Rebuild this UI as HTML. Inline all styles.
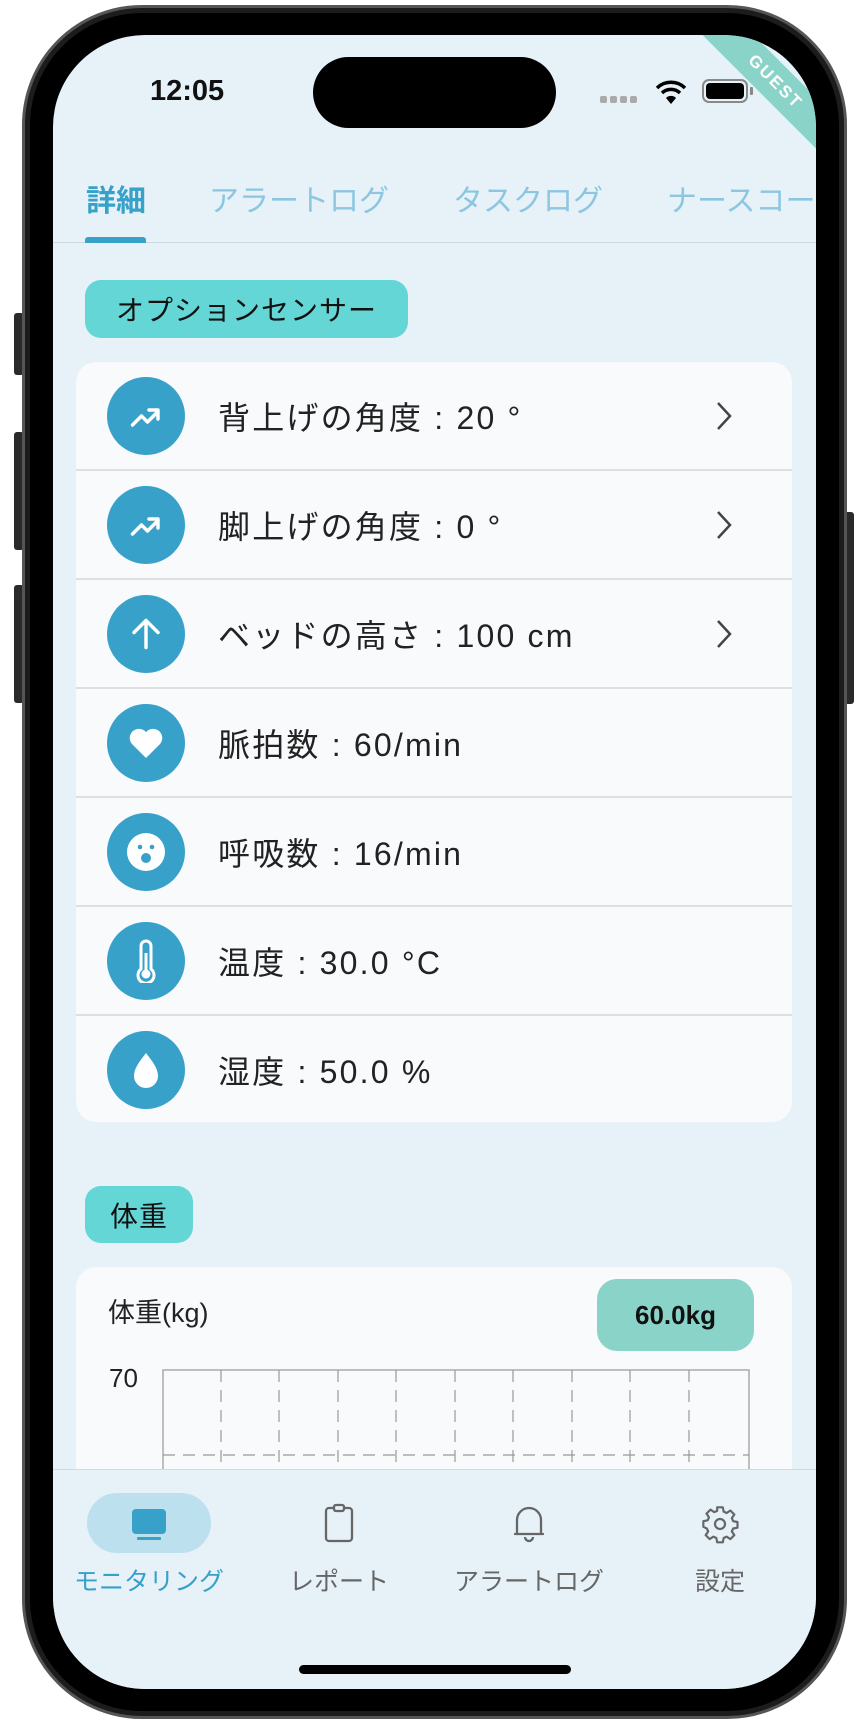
<!DOCTYPE html>
<html><head><meta charset="utf-8"><style>
*{margin:0;padding:0;box-sizing:border-box}
body{width:868px;height:1724px;background:#fff;position:relative;overflow:hidden;font-family:"Liberation Sans","Noto Sans CJK JP",sans-serif}
.abs{position:absolute}
.phone{left:22px;top:5px;width:825px;height:1714px;border-radius:120px;background:#1c1c1c;border:3px solid #555}
.bezel{left:30px;top:13px;width:809px;height:1698px;border-radius:112px;background:#000}
.screen{left:53px;top:35px;width:763px;height:1654px;border-radius:92px;background:#e6f1f8;overflow:hidden}
.btn{background:#2a2a2a;border-radius:3px}
.tab{position:absolute;top:141px;font-size:30px;color:#8cc6e1;white-space:nowrap}
.pill{position:absolute;background:#64d6d5;border-radius:16px;font-size:28px;letter-spacing:1px;color:#111;display:flex;align-items:center;justify-content:center}
.card{position:absolute;left:23px;width:716px;background:#f8fafc;border-radius:20px}
.row{position:absolute;left:0;width:716px;height:109px;border-bottom:2px solid #dcdfe3}
.ic{position:absolute;left:31px;top:15px;width:78px;height:78px;border-radius:50%;background:#37a1ca;display:flex;align-items:center;justify-content:center}
.rt{position:absolute;left:142px;top:31px;font-size:32px;color:#222;white-space:nowrap;letter-spacing:2.2px}
.chev{position:absolute;left:638px;top:38px}
.nl{position:absolute;top:1527px;font-size:25px;color:#666;white-space:nowrap;transform:translateX(-50%)}
</style></head><body>
<div class="abs btn" style="left:14px;top:313px;width:10px;height:62px"></div>
<div class="abs btn" style="left:14px;top:432px;width:10px;height:118px"></div>
<div class="abs btn" style="left:14px;top:585px;width:10px;height:118px"></div>
<div class="abs btn" style="left:844px;top:512px;width:10px;height:192px"></div>
<div class="abs phone"></div>
<div class="abs bezel"></div>
<div class="abs screen">
  <div class="abs" style="left:97px;top:40px;font-size:29px;font-weight:bold;color:#111">12:05</div>
  <div class="abs" style="left:260px;top:22px;width:243px;height:71px;border-radius:36px;background:#000"></div>
  <div class="abs" style="left:547px;top:61px;display:flex;gap:3px"><i style="width:7px;height:7px;border-radius:2px;background:#aaa;display:block"></i><i style="width:7px;height:7px;border-radius:2px;background:#aaa;display:block"></i><i style="width:7px;height:7px;border-radius:2px;background:#aaa;display:block"></i><i style="width:7px;height:7px;border-radius:2px;background:#aaa;display:block"></i></div>
  <svg class="abs" style="left:602px;top:44px" width="32" height="26" viewBox="0 0 32 26"><path d="M2 9a20 20 0 0 1 28 0" stroke="#000" stroke-width="3.5" fill="none"/><path d="M7 14a13 13 0 0 1 18 0" stroke="#000" stroke-width="3.5" fill="none"/><path d="M16 25l-5-6a7 7 0 0 1 10 0z" fill="#000"/></svg>
  <div class="abs" style="left:649px;top:44px;width:46px;height:24px;border:2px solid #888;border-radius:7px;padding:2px"><div style="width:100%;height:100%;background:#000;border-radius:4px"></div></div>
  <div class="abs" style="left:697px;top:52px;width:3px;height:8px;background:#888;border-radius:1px"></div>
  <div class="abs" style="left:722px;top:47px;width:220px;height:36px;margin-left:-110px;margin-top:-18px;background:#8ad3c8;transform:rotate(45deg);color:#fff;font-weight:bold;font-size:17px;text-align:center;line-height:36px;letter-spacing:2px">GUEST</div>
  <div class="tab" style="left:33px;color:#37a1ca;font-weight:bold">詳細</div>
  <div class="tab" style="left:156px">アラートログ</div>
  <div class="tab" style="left:400px">タスクログ</div>
  <div class="tab" style="left:614px">ナースコール</div>
  <div class="abs" style="left:0;top:207px;width:763px;height:1px;background:#cdd9e0"></div>
  <div class="abs" style="left:32px;top:202px;width:61px;height:6px;border-radius:3px 3px 0 0;background:#37a1ca"></div>
  <div class="pill" style="left:32px;top:245px;width:323px;height:58px">オプションセンサー</div>
  <div class="card" style="top:327px;height:760px">
    <div class="row" style="top:0">
      <div class="ic"><svg width="36" height="36" viewBox="0 0 24 24"><path d="M3 18l6-6 4 4 7-7M14 8h6v6" stroke="#fff" stroke-width="2.3" fill="none" stroke-linecap="round" stroke-linejoin="round"/></svg></div>
      <div class="rt">背上げの角度 : 20 °</div>
      <svg class="chev" width="20" height="32" viewBox="0 0 20 32"><path d="M4 3l12 13L4 29" stroke="#444" stroke-width="2.5" fill="none"/></svg>
    </div>
    <div class="row" style="top:109px">
      <div class="ic"><svg width="36" height="36" viewBox="0 0 24 24"><path d="M3 18l6-6 4 4 7-7M14 8h6v6" stroke="#fff" stroke-width="2.3" fill="none" stroke-linecap="round" stroke-linejoin="round"/></svg></div>
      <div class="rt">脚上げの角度 : 0 °</div>
      <svg class="chev" width="20" height="32" viewBox="0 0 20 32"><path d="M4 3l12 13L4 29" stroke="#444" stroke-width="2.5" fill="none"/></svg>
    </div>
    <div class="row" style="top:218px">
      <div class="ic"><svg width="36" height="36" viewBox="0 0 24 24"><path d="M12 21V4M4 11l8-8 8 8" stroke="#fff" stroke-width="2.3" fill="none" stroke-linecap="round" stroke-linejoin="round"/></svg></div>
      <div class="rt">ベッドの高さ : 100 cm</div>
      <svg class="chev" width="20" height="32" viewBox="0 0 20 32"><path d="M4 3l12 13L4 29" stroke="#444" stroke-width="2.5" fill="none"/></svg>
    </div>
    <div class="row" style="top:327px">
      <div class="ic"><svg width="40" height="40" viewBox="0 0 24 24"><path d="M12 21L3.5 12.5A5 5 0 0 1 12 5.5a5 5 0 0 1 8.5 7z" fill="#fff"/></svg></div>
      <div class="rt">脈拍数 : 60/min</div>
    </div>
    <div class="row" style="top:436px">
      <div class="ic"><svg width="40" height="40" viewBox="0 0 40 40"><circle cx="20" cy="20" r="19" fill="#fff"/><circle cx="14" cy="15" r="2.3" fill="#37a1ca"/><circle cx="26" cy="15" r="2.3" fill="#37a1ca"/><circle cx="20" cy="26" r="5" fill="#37a1ca"/></svg></div>
      <div class="rt">呼吸数 : 16/min</div>
    </div>
    <div class="row" style="top:545px">
      <div class="ic"><svg width="30" height="44" viewBox="0 0 30 44"><path d="M10 30V7a5 5 0 0 1 10 0v23a8 8 0 1 1-10 0z" stroke="#fff" stroke-width="3" fill="none"/><path d="M15 14v17" stroke="#fff" stroke-width="3"/><circle cx="15" cy="35" r="4.5" fill="#fff"/></svg></div>
      <div class="rt">温度 : 30.0 °C</div>
    </div>
    <div class="row" style="top:654px;border-bottom:none">
      <div class="ic"><svg width="34" height="40" viewBox="0 0 34 40"><path d="M17 3C11 11 5 18 5 26a12 12 0 0 0 24 0C29 18 23 11 17 3z" fill="#fff"/></svg></div>
      <div class="rt">湿度 : 50.0 %</div>
    </div>
  </div>
  <div class="pill" style="left:32px;top:1151px;width:108px;height:57px">体重</div>
  <div class="card" style="top:1232px;height:400px">
    <div class="abs" style="left:32px;top:24px;font-size:27px;color:#222">体重(kg)</div>
    <div class="abs" style="left:521px;top:12px;width:157px;height:72px;border-radius:20px;background:#8ad3c8;font-size:26px;font-weight:bold;color:#111;display:flex;align-items:center;justify-content:center">60.0kg</div>
    <div class="abs" style="left:33px;top:96px;font-size:26px;color:#222">70</div>
    <svg class="abs" style="left:86px;top:102px" width="590" height="200">
      <rect x="1" y="1" width="586" height="200" fill="none" stroke="#aaa" stroke-width="1.5"/>
      <g stroke="#999" stroke-width="1.2" stroke-dasharray="12 8">
        <path d="M59 1V200M117 1V200M176 1V200M234 1V200M293 1V200M351 1V200M410 1V200M468 1V200M527 1V200"/>
        <path d="M1 86H587"/>
      </g>
    </svg>
  </div>
  <div class="abs" style="left:0;top:1434px;width:763px;height:230px;background:#e6f1f8;border-top:1px solid #cfdbe2"></div>
  <div class="abs" style="left:34px;top:1458px;width:124px;height:60px;border-radius:30px;background:#bde0ee"></div>
  <svg class="abs" style="left:76px;top:1472px" width="40" height="34" viewBox="0 0 40 34"><rect x="3" y="2" width="34" height="25" rx="4" fill="#37a1ca"/><rect x="8" y="30" width="24" height="3" rx="1" fill="#37a1ca"/></svg>
  <svg class="abs" style="left:270px;top:1468px" width="32" height="40" viewBox="0 0 32 40"><rect x="3" y="5" width="26" height="33" rx="3" stroke="#666" stroke-width="2.3" fill="none"/><rect x="11" y="2" width="10" height="6" rx="2" stroke="#666" stroke-width="2.3" fill="#e6f1f8"/></svg>
  <svg class="abs" style="left:459px;top:1467px" width="34" height="42" viewBox="0 0 34 42"><path d="M5 32V18a12 12 0 0 1 24 0v14h2H3z" stroke="#666" stroke-width="2.3" fill="none" stroke-linejoin="round"/><path d="M13 35a4 4 0 0 0 8 0" stroke="#666" stroke-width="2.3" fill="none"/></svg>
  <svg class="abs" style="left:647px;top:1469px" width="40" height="40" viewBox="0 0 24 24"><path d="M10.3 2h3.4l.5 2.6 1.8.8 2.2-1.5 2.4 2.4-1.5 2.2.8 1.8 2.6.5v3.4l-2.6.5-.8 1.8 1.5 2.2-2.4 2.4-2.2-1.5-1.8.8-.5 2.6h-3.4l-.5-2.6-1.8-.8-2.2 1.5-2.4-2.4 1.5-2.2-.8-1.8L2 13.7v-3.4l2.6-.5.8-1.8-1.5-2.2 2.4-2.4 2.2 1.5 1.8-.8z" stroke="#666" stroke-width="1.3" fill="none" stroke-linejoin="round"/><circle cx="12" cy="12" r="3" stroke="#666" stroke-width="1.3" fill="none"/></svg>
  <div class="nl" style="left:96px;color:#37a1ca">モニタリング</div>
  <div class="nl" style="left:286px">レポート</div>
  <div class="nl" style="left:476px">アラートログ</div>
  <div class="nl" style="left:667px">設定</div>
  <div class="abs" style="left:246px;top:1630px;width:272px;height:9px;border-radius:5px;background:#000"></div>
</div>
</body></html>
